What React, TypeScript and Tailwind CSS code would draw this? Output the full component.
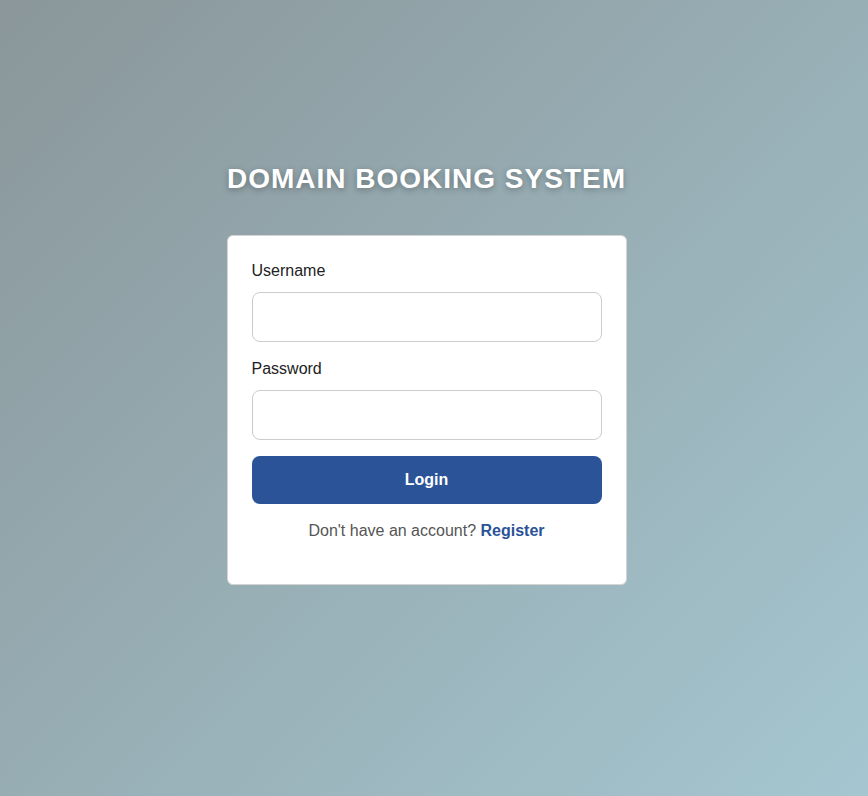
export default function App() {
  return (
    <div className="min-h-[796px] w-full bg-[linear-gradient(135deg,#8a969a_0%,#a5c6d0_100%)] font-['Liberation_Sans',Arial,sans-serif] flex flex-col items-center pt-[163px] pr-[15px]">
      <h1 className="text-[28px] leading-[32px] font-bold text-white tracking-[1px] [text-shadow:0_2px_6px_rgba(0,0,0,0.3)] mb-[40px]">
        DOMAIN BOOKING SYSTEM
      </h1>
      <div className="w-[400px] bg-white border border-[#d4d4d4] rounded-[6px] px-6 pt-6 pb-[24px]">
        <form onSubmit={(e) => e.preventDefault()}>
          <label className="block text-[16px] leading-[22px] text-[#222] mb-[10px]">Username</label>
          <input
            type="text"
            className="block w-full h-[50px] border border-[#cccccc] rounded-[8px] px-3 text-[16px] outline-none mb-4"
          />
          <label className="block text-[16px] leading-[22px] text-[#222] mb-[10px]">Password</label>
          <input
            type="password"
            className="block w-full h-[50px] border border-[#cccccc] rounded-[8px] px-3 text-[16px] outline-none mb-4"
          />
          <button
            type="submit"
            className="block w-full h-[48px] rounded-[8px] bg-[#2b5398] text-white font-bold text-[16px]"
          >
            Login
          </button>
          <p className="text-center text-[16px] leading-[22px] text-[#555] mt-4 mb-[18px]">
            Don't have an account?{' '}
            <a href="#" className="font-bold text-[#2b5398]">
              Register
            </a>
          </p>
        </form>
      </div>
    </div>
  );
}
